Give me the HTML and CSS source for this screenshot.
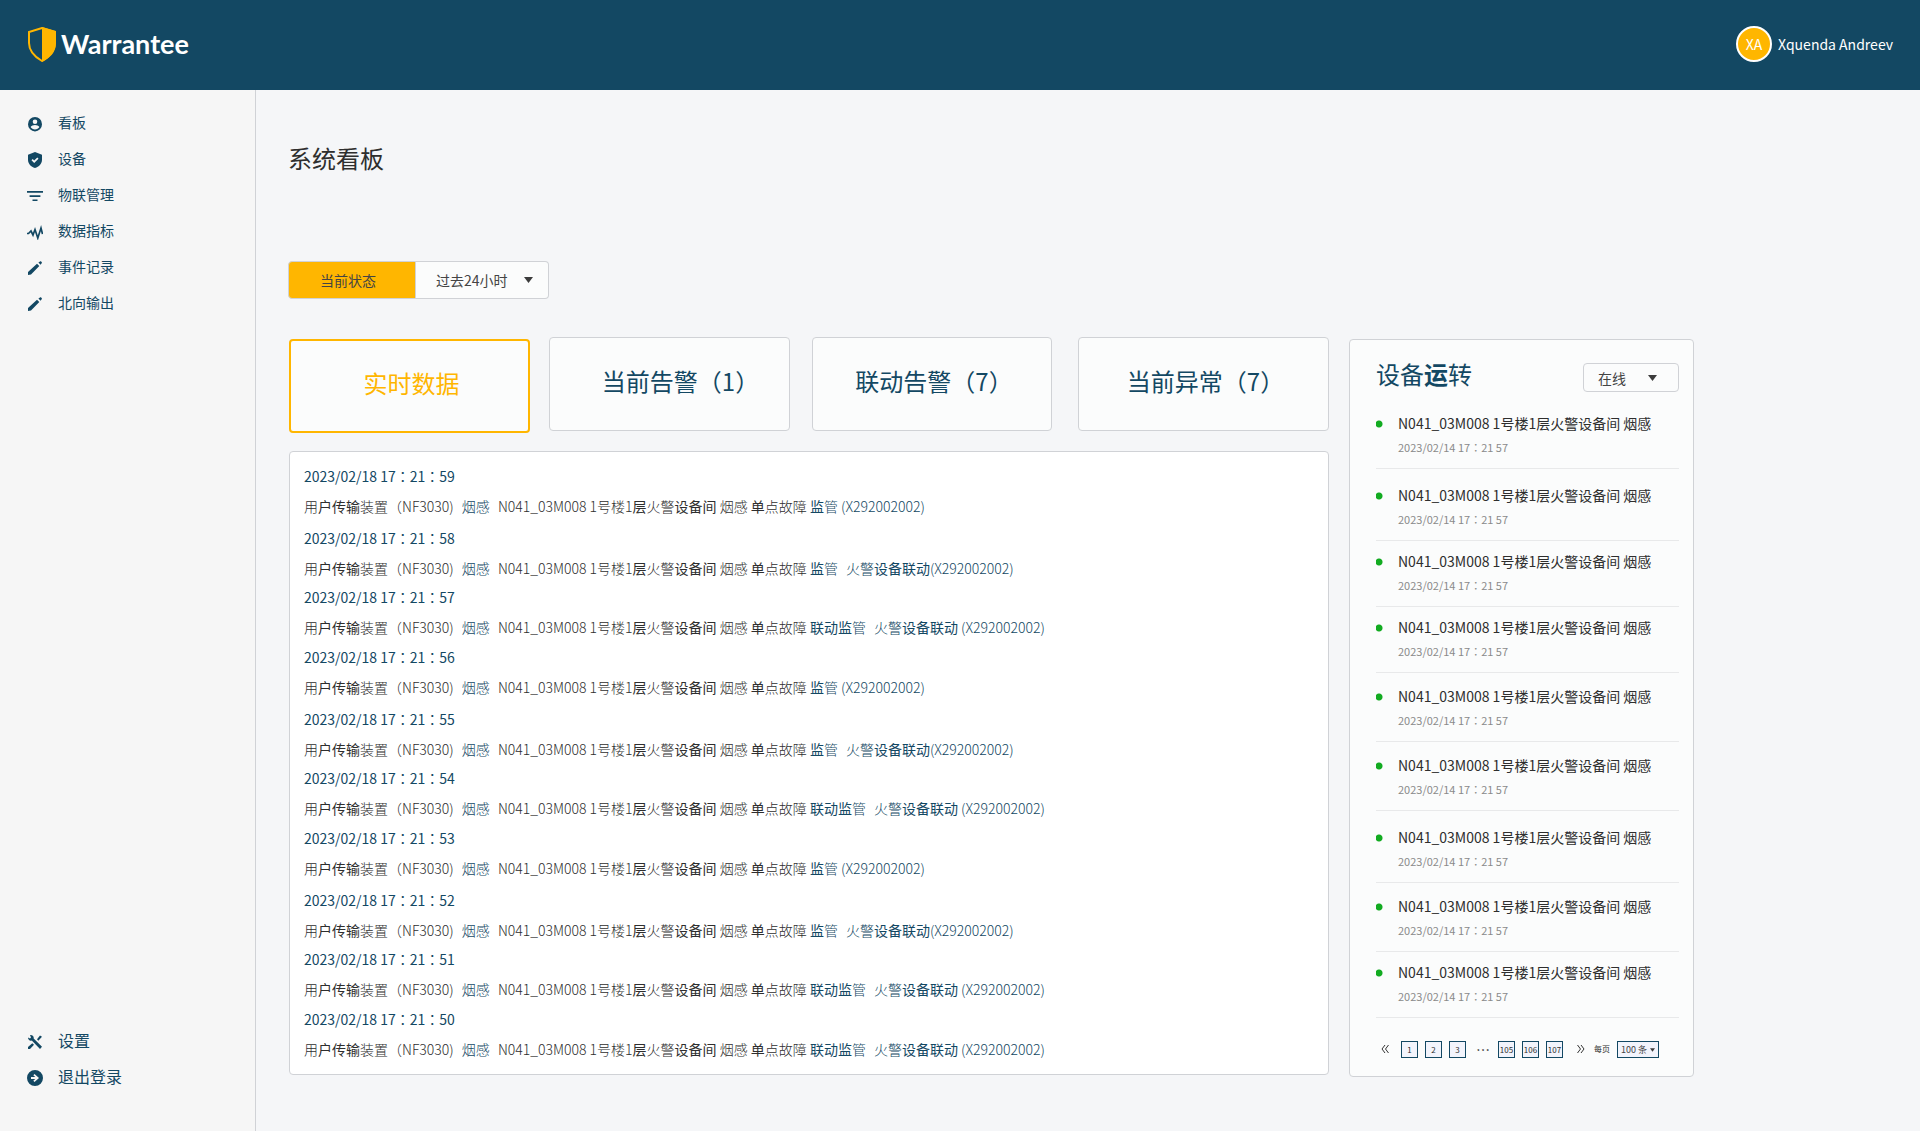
FILE: index.html
```html
<!DOCTYPE html>
<html lang="zh-CN">
<head>
<meta charset="utf-8">
<title>Warrantee - 系统看板</title>
<link rel="stylesheet" href="styles.css">
</head>
<body>
<header class="topbar">
  <a class="brand" href="#">
    <svg class="brand-mark" viewBox="0 0 28 35" aria-hidden="true"><path d="M14 1L27 5v11c0 8-6 14-13 18C7 30 1 24 1 16V5z" fill="none" stroke="#ffb600" stroke-width="2"/><path d="M14 0l14 4v12c0 9-6 15-14 19z" fill="#ffb600"/></svg>
    <span class="brand-name">Warrantee</span>
  </a>
  <div class="user"><span class="avatar">XA</span><span class="user-name">Xquenda Andreev</span></div>
</header>
<div class="layout">
  <nav class="sidebar">
    <ul class="menu">
      <li><a href="#"><svg viewBox="0 0 16 16"><path fill-rule="evenodd" d="M8 1a7 7.200 0 1 0 0 14.400A7 7.200 0 1 0 8 1zm0 2.400a2.300 2.300 0 1 1 0 4.600 2.300 2.300 0 0 1 0-4.600zM8 13.400c-1.900 0-3.500-.9-4.400-2.300C4 9.700 6.600 9 8 9s4 .7 4.400 2.100C11.500 12.500 9.900 13.400 8 13.400z"/></svg>看板</a></li>
      <li><a href="#"><svg viewBox="0 0 16 16"><path fill-rule="evenodd" d="M8 0l7 2.700v5c0 3.900-3 7.200-7 8.300-4-1.100-7-4.400-7-8.300v-5zM7.200 11l4.300-4.300-1.200-1.200-3.100 3.100-1.500-1.500-1.200 1.200z"/></svg>设备</a></li>
      <li><a href="#"><svg viewBox="0 0 16 16"><path d="M0 3h16v1.700H0zM2.600 7.200h10.800V9H2.600zM5.500 11.400h5v1.700h-5z"/></svg>物联管理</a></li>
      <li><a href="#"><svg viewBox="0 0 16 16"><path d="M0 9.500h1.500L4 7l2 4L8 5.500l2.800 8.500L14 4l1.500 6" fill="none" stroke="currentColor" stroke-width="1.700"/></svg>数据指标</a></li>
      <li><a href="#"><svg viewBox="0 0 16 16"><path d="M1 15v-3L10 3.700l2.300 2.200L4 14.400zM11.400 2.400L13 1.500c.4-.3.8-.3 1.100 0l.6.600c.3.3.3.8 0 1.100l-1.200 1.500z"/></svg>事件记录</a></li>
      <li><a href="#"><svg viewBox="0 0 16 16"><path d="M1 15v-3L10 3.700l2.300 2.200L4 14.400zM11.400 2.400L13 1.500c.4-.3.8-.3 1.100 0l.6.600c.3.3.3.8 0 1.100l-1.200 1.500z"/></svg>北向输出</a></li>
    </ul>
    <ul class="menu menu-large">
      <li><a href="#"><svg viewBox="0 0 16 16"><path d="M10 5.200L13 1.500l2 1.300-3.700 3.900zM5.300 9.200l1.700 1.600L3 15H1v-2zM3 1c2-.4 4.200 1 3.700 3.500L15 12.800 13 15 4.800 6.500C3 7.200 1 6 1 3.500l2 1 1-1z"/></svg>设置</a></li>
      <li><a href="#"><svg viewBox="0 0 16 16"><path fill-rule="evenodd" d="M8 0a8 8 0 1 0 0 16A8 8 0 1 0 8 0zM7.500 4L12 8l-4.500 4-1.200-1.200L8.300 9H4V7h4.300L6.300 5.200z"/></svg>退出登录</a></li>
    </ul>
  </nav>
  <main class="content">
    <h1 class="page-title">系统看板</h1>
    <div class="filters">
      <button class="status-button" type="button">当前状态</button>
      <label class="picker period"><select aria-label="时间范围"><option>过去24小时</option></select><svg class="caret" viewBox="0 0 9 6" aria-hidden="true"><path d="M0 0h9L4.500 6z"/></svg></label>
    </div>
    <div class="board">
      <section class="records">
        <div class="tabs">
          <button class="tab tab-active" type="button">实时数据</button>
          <button class="tab tab-inset" type="button">当前告警（1）</button>
          <button class="tab" type="button">联动告警（7）</button>
          <button class="tab" type="button">当前异常（7）</button>
        </div>
        <ol class="log">
          <li><time>2023/02/18 17：21：59</time><p>用<b>户传输</b>装置（NF3030) <a class="kind" href="#">烟感</a> N041_03M008 1号楼1<b>层</b>火警<b>设备间</b> 烟感 <b>单</b>点故障 <a href="#"><b>监</b>管 (X292002002)</a></p></li>
          <li><time>2023/02/18 17：21：58</time><p>用<b>户传输</b>装置（NF3030) <a class="kind" href="#">烟感</a> N041_03M008 1号楼1<b>层</b>火警<b>设备间</b> 烟感 <b>单</b>点故障 <a href="#"><b>监</b>管<span class="link-part">火警<b>设备联动</b></span>(X292002002)</a></p></li>
          <li><time>2023/02/18 17：21：57</time><p>用<b>户传输</b>装置（NF3030) <a class="kind" href="#">烟感</a> N041_03M008 1号楼1<b>层</b>火警<b>设备间</b> 烟感 <b>单</b>点故障 <a href="#"><b>联动监</b>管<span class="link-part">火警<b>设备联动</b></span> (X292002002)</a></p></li>
          <li><time>2023/02/18 17：21：56</time><p>用<b>户传输</b>装置（NF3030) <a class="kind" href="#">烟感</a> N041_03M008 1号楼1<b>层</b>火警<b>设备间</b> 烟感 <b>单</b>点故障 <a href="#"><b>监</b>管 (X292002002)</a></p></li>
          <li><time>2023/02/18 17：21：55</time><p>用<b>户传输</b>装置（NF3030) <a class="kind" href="#">烟感</a> N041_03M008 1号楼1<b>层</b>火警<b>设备间</b> 烟感 <b>单</b>点故障 <a href="#"><b>监</b>管<span class="link-part">火警<b>设备联动</b></span>(X292002002)</a></p></li>
          <li><time>2023/02/18 17：21：54</time><p>用<b>户传输</b>装置（NF3030) <a class="kind" href="#">烟感</a> N041_03M008 1号楼1<b>层</b>火警<b>设备间</b> 烟感 <b>单</b>点故障 <a href="#"><b>联动监</b>管<span class="link-part">火警<b>设备联动</b></span> (X292002002)</a></p></li>
          <li><time>2023/02/18 17：21：53</time><p>用<b>户传输</b>装置（NF3030) <a class="kind" href="#">烟感</a> N041_03M008 1号楼1<b>层</b>火警<b>设备间</b> 烟感 <b>单</b>点故障 <a href="#"><b>监</b>管 (X292002002)</a></p></li>
          <li><time>2023/02/18 17：21：52</time><p>用<b>户传输</b>装置（NF3030) <a class="kind" href="#">烟感</a> N041_03M008 1号楼1<b>层</b>火警<b>设备间</b> 烟感 <b>单</b>点故障 <a href="#"><b>监</b>管<span class="link-part">火警<b>设备联动</b></span>(X292002002)</a></p></li>
          <li><time>2023/02/18 17：21：51</time><p>用<b>户传输</b>装置（NF3030) <a class="kind" href="#">烟感</a> N041_03M008 1号楼1<b>层</b>火警<b>设备间</b> 烟感 <b>单</b>点故障 <a href="#"><b>联动监</b>管<span class="link-part">火警<b>设备联动</b></span> (X292002002)</a></p></li>
          <li><time>2023/02/18 17：21：50</time><p>用<b>户传输</b>装置（NF3030) <a class="kind" href="#">烟感</a> N041_03M008 1号楼1<b>层</b>火警<b>设备间</b> 烟感 <b>单</b>点故障 <a href="#"><b>联动监</b>管<span class="link-part">火警<b>设备联动</b></span> (X292002002)</a></p></li>
        </ol>
      </section>
      <aside class="devices">
        <div class="devices-head">
          <h2>设备<b>运</b>转</h2>
          <label class="picker state"><select aria-label="设备状态"><option>在线</option></select><svg class="caret" viewBox="0 0 9 6" aria-hidden="true"><path d="M0 0h9L4.500 6z"/></svg></label>
        </div>
        <ul class="device-list">
          <li><span>N041_03M008 1号楼1层火警设备间 烟感</span><time>2023/02/14 17：21 57</time></li>
          <li class="loose"><span>N041_03M008 1号楼1层火警设备间 烟感</span><time>2023/02/14 17：21 57</time></li>
          <li class="tight"><span>N041_03M008 1号楼1层火警设备间 烟感</span><time>2023/02/14 17：21 57</time></li>
          <li class="tight"><span>N041_03M008 1号楼1层火警设备间 烟感</span><time>2023/02/14 17：21 57</time></li>
          <li><span>N041_03M008 1号楼1层火警设备间 烟感</span><time>2023/02/14 17：21 57</time></li>
          <li><span>N041_03M008 1号楼1层火警设备间 烟感</span><time>2023/02/14 17：21 57</time></li>
          <li class="loose"><span>N041_03M008 1号楼1层火警设备间 烟感</span><time>2023/02/14 17：21 57</time></li>
          <li><span>N041_03M008 1号楼1层火警设备间 烟感</span><time>2023/02/14 17：21 57</time></li>
          <li class="tight"><span>N041_03M008 1号楼1层火警设备间 烟感</span><time>2023/02/14 17：21 57</time></li>
        </ul>
        <div class="pager">
          <button class="step" type="button" aria-label="上一页"><svg viewBox="0 0 8 8"><path d="M4 0L1 4l3 4M7.500 0l-3 4 3 4"/></svg></button>
          <div class="pages"><button type="button">1</button><button type="button">2</button><button type="button">3</button></div>
          <span class="ellipsis">⋯</span>
          <div class="pages"><button type="button">105</button><button type="button">106</button><button type="button">107</button></div>
          <button class="step step-next" type="button" aria-label="下一页"><svg viewBox="0 0 8 8"><path d="M.5 0l3 4-3 4M4 0l3 4-3 4"/></svg></button>
          <label class="per-page" for="per-page">每页</label>
          <span class="picker size"><select id="per-page"><option>100 条</option></select><svg class="caret" viewBox="0 0 9 6" aria-hidden="true"><path d="M0 0h9L4.500 6z"/></svg></span>
        </div>
      </aside>
    </div>
  </main>
</div>
</body>
</html>
```
FILE: styles.css
```css
:root {
  --navy: #134863;
  --amber: #ffb600;
  --line: #d0d2d6;
  --card: #fbfcfc;
  --ink: #2e2e2e;
}

* { box-sizing: border-box; }

body {
  margin: 0;
  min-height: 100vh;
  display: flex;
  flex-direction: column;
  background: #f5f6f8;
  color: var(--ink);
  font: 14px/20px "Noto Sans CJK SC", sans-serif;
}

h1, h2, p, ul, ol { margin: 0; padding: 0; font-weight: 400; }
ul, ol { list-style: none; }
a { color: var(--navy); text-decoration: none; }
button, select { margin: 0; padding: 0; font: inherit; color: inherit; cursor: pointer; }

/* The Japanese face centres the full-width colon in its cell. */
time {
  font-family: "Noto Sans CJK JP", sans-serif;
  font-feature-settings: "locl" 0;
}

.topbar {
  height: 90px;
  padding: 0 27px 2px 28px;
  display: flex;
  align-items: center;
  justify-content: space-between;
  background: var(--navy);
  color: #fff;
}
.brand { display: flex; align-items: center; gap: 5px; color: #fff; }
.brand-mark { width: 28px; height: 35px; }
.brand-name { font: 700 27px/32px Lato, sans-serif; }
.user { display: flex; align-items: center; gap: 6px; }
.avatar {
  width: 36px;
  height: 36px;
  border: 2px solid #fff;
  border-radius: 50%;
  background: var(--amber);
  line-height: 32px;
  text-align: center;
}

.layout { flex: 1; display: flex; }
.sidebar {
  width: 256px;
  flex: none;
  padding: 14px 0 38px 27px;
  display: flex;
  flex-direction: column;
  justify-content: space-between;
  border-right: 1px solid var(--line);
  background: #f6f6f6;
}
.menu a { display: flex; align-items: center; gap: 15px; height: 36px; }
.menu svg { width: 16px; height: 16px; margin-top: 4px; fill: currentColor; }
.menu-large { font-size: 16px; }

.content { flex: 1; min-width: 0; padding: 50px 226px 55px 32px; }
.page-title { font-size: 24px; line-height: 36px; }

.filters { display: flex; margin-top: 85px; }
.status-button {
  width: 128px;
  height: 38px;
  padding-right: 8px;
  border: 1px solid var(--line);
  border-radius: 4px 0 0 4px;
  background: var(--amber);
  color: #444;
}
.picker { position: relative; display: flex; color: #444; }
.picker select {
  width: 100%;
  appearance: none;
  border: 1px solid var(--line);
  border-radius: 4px;
  background: var(--card);
}
.caret {
  position: absolute;
  top: 50%;
  right: 16px;
  width: 9px;
  height: 6px;
  margin-top: -3px;
  fill: #3c3c3c;
  pointer-events: none;
}
.period { width: 133px; }
.period select { padding-left: 20px; border-left: 0; border-radius: 0 4px 4px 0; }

.board {
  display: grid;
  grid-template-columns: minmax(0, 1fr) 345px;
  gap: 20px;
  margin-top: 38px;
  padding-left: 1px;
}
.records { display: flex; flex-direction: column; gap: 18px; padding-bottom: 2px; }
.tabs {
  display: grid;
  grid-template-columns: 241fr 19px 241fr 22px 240fr 26px 251fr;
  align-items: start;
  height: 96px;
}
.tab {
  height: 94px;
  padding: 0 0 6px 4px;
  border: 1px solid var(--line);
  border-radius: 4px;
  background: var(--card);
  color: var(--navy);
  font-size: 24px;
}
.tab:nth-child(2) { grid-column: 3; }
.tab:nth-child(3) { grid-column: 5; }
.tab:nth-child(4) { grid-column: 7; }
.tab-active { margin-top: 2px; border: 2px solid var(--amber); color: var(--amber); }
.tab-inset { padding-left: 22px; }

.log {
  flex: 1;
  padding: 14px 14px 0;
  border: 1px solid var(--line);
  border-radius: 4px;
  background: #fff;
}
.log li { height: 59px; }
.log li:nth-child(3n) { height: 60px; }
.log li:nth-child(3n + 1) { height: 62px; }
.log time { display: block; color: var(--navy); }
.log p { margin-top: 10px; font-weight: 300; white-space: nowrap; }
.log b { font-weight: 400; }
.kind { margin: 0 5px; }
.link-part { margin-left: 8px; }

.devices {
  margin-top: 2px;
  padding: 16px 14px 17px 26px;
  border: 1px solid var(--line);
  border-radius: 4px;
  background: var(--card);
}
.devices-head { display: flex; justify-content: space-between; align-items: flex-end; }
.devices-head h2 { color: var(--navy); font-size: 24px; line-height: 36px; }
.state { width: 96px; height: 29px; }
.state select { padding-left: 14px; }
.state .caret { right: 22px; }

.device-list { padding-top: 8px; }
.device-list li {
  display: flex;
  flex-direction: column;
  gap: 6px;
  height: 69px;
  padding: 13px 0 0 22px;
  border-bottom: 1px solid #e8e9ea;
  background: radial-gradient(circle at 3px 24px, #12ab21 3px, transparent 4px) no-repeat;
}
.device-list .loose { height: 72px; padding-top: 16px; background-position: 0 3px; }
.device-list .tight { height: 66px; padding-top: 10px; background-position: 0 -3px; }
.device-list time { color: #8a8a8a; font-size: 11px; line-height: 16px; }

.pager { display: flex; align-items: center; padding: 21px 16px 0 5px; }
.step { width: 10px; height: 16px; border: 0; background: none; }
.step svg { display: block; width: 8px; height: 8px; fill: none; stroke: #333; }
.step-next { margin-left: 4px; }
.pages { display: flex; gap: 7px; margin: 0 10px; }
.pages button, .size select {
  width: 17px;
  height: 17px;
  border: 1px solid var(--navy);
  border-radius: 0;
  background: #f2f4fc;
  font-size: 8px;
  line-height: 15px;
}
.ellipsis { width: 12px; text-align: center; }
.per-page { margin: 0 7px; font-size: 8px; }
.size select { width: 42px; padding-left: 3px; font-size: 9px; }
.size .caret { right: 4px; width: 5px; height: 4px; margin-top: -1px; }
```
